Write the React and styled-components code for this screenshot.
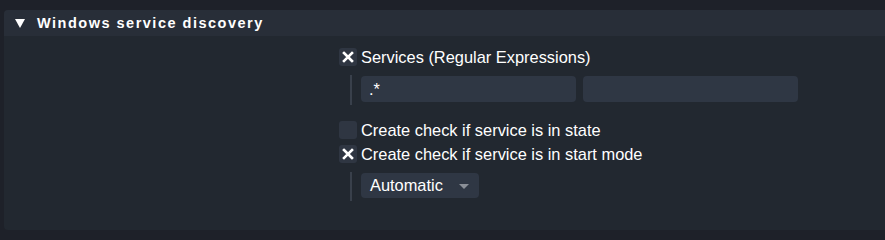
import React from 'react';
import styled, { createGlobalStyle } from 'styled-components';

const GlobalStyle = createGlobalStyle`
  body {
    margin: 0;
    background: #1e2129;
    font-family: "Liberation Sans", Arial, sans-serif;
    color: #ffffff;
  }
`;

const Page = styled.div`
  padding: 10px 0 0 4px;
  height: 240px;
  box-sizing: border-box;
`;

const Panel = styled.div`
  width: 900px;
  height: 220px;
  background: #222830;
  border-radius: 4px;
  overflow: hidden;
`;

const Header = styled.div`
  height: 26px;
  background: #282e38;
  display: flex;
  align-items: center;
  padding-left: 11px;
  gap: 12px;
  font-size: 14.5px;
  font-weight: bold;
  letter-spacing: 1.5px;
`;

const Triangle = styled.span`
  width: 0;
  height: 0;
  border-left: 5px solid transparent;
  border-right: 5px solid transparent;
  border-top: 9px solid #ffffff;
`;

const Body = styled.div`
  padding: 9px 0 0 335px;
  display: flex;
  flex-direction: column;
`;

const CheckRow = styled.label`
  display: flex;
  align-items: center;
  gap: 4px;
  height: 24px;
  font-size: 16.4px;
`;

const Box = styled.span`
  width: 18px;
  height: 18px;
  border-radius: 3px;
  background: #2f3642;
  display: flex;
  align-items: center;
  justify-content: center;
`;

const Nested = styled.div`
  margin: ${p => p.$margin};
  padding-left: 22px;
  position: relative;
  display: flex;
  gap: 7px;
  &::before {
    content: '';
    position: absolute;
    left: 11px;
    top: -1px;
    bottom: -3px;
    width: 2px;
    background: #39404b;
  }
`;

const Input = styled.div`
  width: 215px;
  height: 26px;
  box-sizing: border-box;
  background: #2f3744;
  border-radius: 4px;
  padding: 4px 8px 0;
  font-size: 16.4px;
`;

const Select = styled.div`
  width: 118px;
  height: 25px;
  box-sizing: border-box;
  background: #2f3744;
  border-radius: 4px;
  display: flex;
  align-items: center;
  padding: 0 10px 0 9px;
  font-size: 16.4px;
  justify-content: space-between;
`;

const Caret = styled.span`
  width: 0;
  height: 0;
  margin-top: 2px;
  border-left: 5px solid transparent;
  border-right: 5px solid transparent;
  border-top: 5px solid #8a8f97;
`;

const Cross = () => (
  <svg width="12" height="12" viewBox="0 0 12 12">
    <path d="M2 2 L10 10 M10 2 L2 10" stroke="#ffffff" strokeWidth="2.6" strokeLinecap="square" />
  </svg>
);

const Check = ({ checked, children }) => (
  <CheckRow>
    <Box>{checked && <Cross />}</Box>
    {children}
  </CheckRow>
);

export default function App() {
  return (
    <>
      <GlobalStyle />
      <Page>
        <Panel>
          <Header>
            <Triangle />
            Windows service discovery
          </Header>
          <Body>
            <Check checked>Services (Regular Expressions)</Check>
            <Nested $margin="7px 0 16px">
              <Input>.*</Input>
              <Input />
            </Nested>
            <Check>Create check if service is in state</Check>
            <Check checked>Create check if service is in start mode</Check>
            <Nested $margin="7px 0 0">
              <Select>
                Automatic
                <Caret />
              </Select>
            </Nested>
          </Body>
        </Panel>
      </Page>
    </>
  );
}
